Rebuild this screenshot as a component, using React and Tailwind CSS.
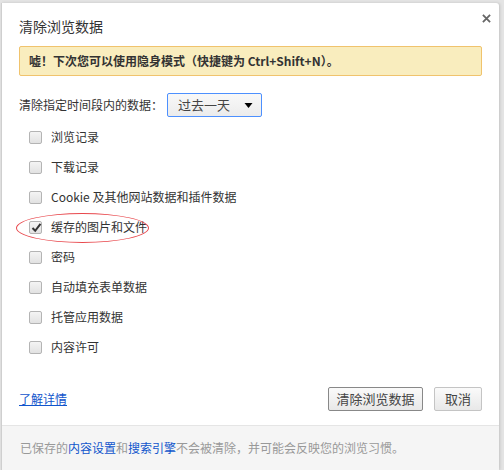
import React from "react";

const font = { fontFamily: '"Noto Sans CJK SC", "Noto Sans", sans-serif' };

const items = [
  { label: "浏览记录", checked: false },
  { label: "下载记录", checked: false },
  { label: "Cookie 及其他网站数据和插件数据", checked: false },
  { label: "缓存的图片和文件", checked: true, circled: true },
  { label: "密码", checked: false },
  { label: "自动填充表单数据", checked: false },
  { label: "托管应用数据", checked: false },
  { label: "内容许可", checked: false },
];

function Box({ checked }) {
  return (
    <span className="relative w-[13px] h-[13px] rounded-[2px] border border-[#b4b4b4] bg-gradient-to-b from-[#f4f4f4] to-[#e2e2e2] shrink-0">
      {checked && (
        <svg viewBox="0 0 13 13" className="absolute left-[0px] top-[-1px] w-[13px] h-[13px]">
          <path d="M2.5 7 L5.2 9.8 L10.5 2.8" fill="none" stroke="#333" strokeWidth="2" />
        </svg>
      )}
    </span>
  );
}

export default function App() {
  return (
    <div className="w-[504px] h-[470px] bg-[#e4e4e4] pt-[3px] pl-[1px] overflow-hidden" style={font}>
      <div className="w-[498px] h-[467px] bg-white rounded-tr-[3px] flex flex-col border-l border-[#cfcfcf] shadow-[1px_0_3px_rgba(0,0,0,0.15)]">
        <div className="relative px-[17px] pt-[12px] flex-1">
          <div className="text-[14px] leading-[22px] text-[#333]">清除浏览数据</div>
          <svg viewBox="0 0 10 10" className="absolute right-[8px] top-[11px] w-[9px] h-[9px]">
            <path d="M1 1 L9 9 M9 1 L1 9" stroke="#666" strokeWidth="2" />
          </svg>

          <div className="mt-[9px] h-[30px] bg-[#f9edbe] border border-[#f0c36d] rounded-[2px] flex items-center pl-[9px] text-[12px] font-bold text-[#333]">
            嘘！下次您可以使用隐身模式（快捷键为 Ctrl+Shift+N）。
          </div>

          <div className="mt-[17px] flex items-center text-[12px] text-[#333]">
            <span>清除指定时间段内的数据：</span>
            <div className="ml-[4px] w-[95px] h-[24px] border border-[#4d90fe] rounded-[2px] bg-gradient-to-b from-[#f8f8f8] to-[#ececec] flex items-center justify-between pl-[10px] pr-[8px]">
              <span className="text-[#444] text-[13px]">过去一天</span>
              <svg viewBox="0 0 8 5" className="w-[9px] h-[5px]">
                <path d="M0 0 L8 0 L4 5 Z" fill="#000" />
              </svg>
            </div>
          </div>

          <div className="mt-[5px] flex flex-col">
            {items.map((it) => (
              <div key={it.label} className="relative h-[30px] flex items-center pl-[10px] gap-[9px] text-[12px] text-[#333]">
                <Box checked={it.checked} />
                <span>{it.label}</span>
                {it.circled && (
                  <span className="absolute left-[-3px] top-[1px] w-[133px] h-[30px] rounded-[50%] border border-[#e8474c]" />
                )}
              </div>
            ))}
          </div>

          <div className="mt-[25px] flex items-center justify-between">
            <a className="text-[12px] text-[#15c] underline">了解详情</a>
            <div className="flex gap-[11px]">
              <button className="h-[24px] w-[95px] border border-[#888] rounded-[2px] bg-gradient-to-b from-[#fafafa] to-[#e8e8e8] text-[13px] text-[#444]">
                清除浏览数据
              </button>
              <button className="h-[24px] w-[48px] border border-[#c4c4c4] rounded-[2px] bg-gradient-to-b from-[#fafafa] to-[#e8e8e8] text-[13px] text-[#444]">
                取消
              </button>
            </div>
          </div>
        </div>

        <div className="h-[45px] border-t border-[#e5e5e5] bg-[#f5f5f5] flex items-center pl-[18px] text-[12px] text-[#999]">
          已保存的<span className="text-[#15c]">内容设置</span>和<span className="text-[#15c]">搜索引擎</span>不会被清除，并可能会反映您的浏览习惯。
        </div>
      </div>
    </div>
  );
}
